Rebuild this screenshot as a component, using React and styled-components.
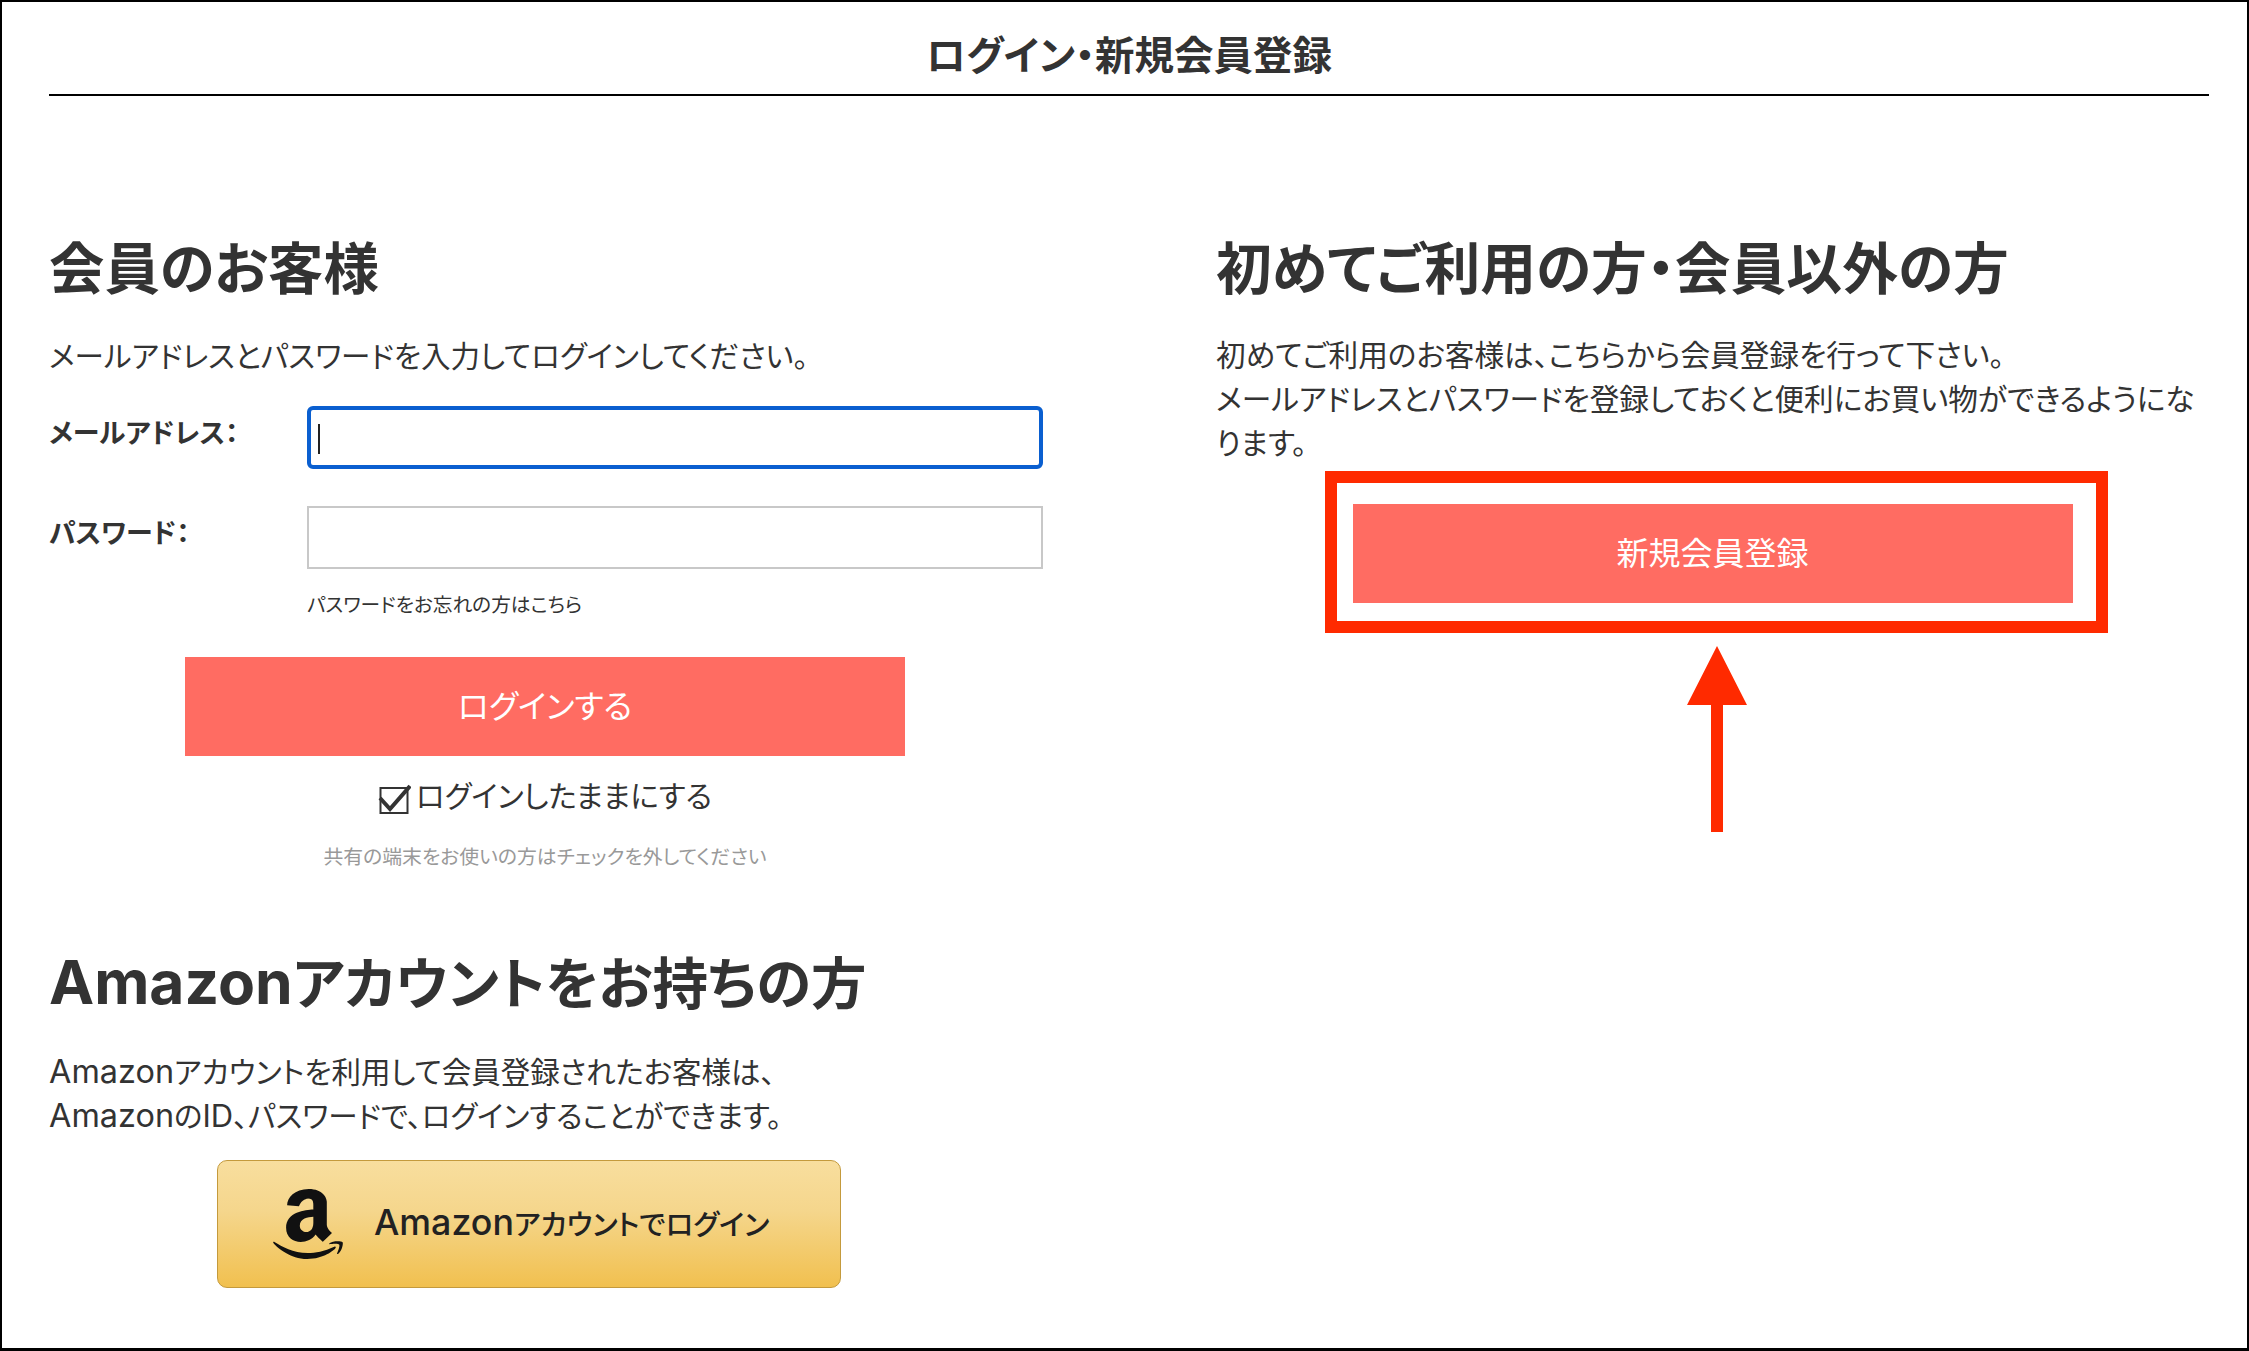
import React from "react";
import styled, { createGlobalStyle } from "styled-components";
import { FaAmazon } from "react-icons/fa";

const GlobalStyle = createGlobalStyle`
  html, body {
    margin: 0;
    padding: 0;
    background: #fff;
  }
  body {
    font-family: "Noto Sans CJK JP", "Liberation Sans", sans-serif;
    font-feature-settings: "palt";
    color: #333;
  }
`;

const Frame = styled.div`
  box-sizing: border-box;
  width: 2249px;
  height: 1351px;
  padding: 0 38px 0 47px;
  border: solid #000;
  border-width: 2px 2px 3px 2px;
  overflow: hidden;
`;

const Header = styled.h1`
  margin: 0;
  height: 94px;
  box-sizing: border-box;
  padding-top: 24px;
  border-bottom: 2px solid #000;
  font-size: 39.5px;
  line-height: 54px;
  font-weight: 700;
  text-align: center;
`;

const Columns = styled.div`
  display: grid;
  grid-template-columns: 992px 993px;
  column-gap: 175px;
  padding-top: 129px;
`;

const Column = styled.section`
  display: flex;
  flex-direction: column;
`;

const Heading = styled.h2`
  margin: 0 0 ${({ $gap }) => $gap}px;
  font-size: ${({ $size }) => $size || 55.8}px;
  line-height: 80px;
  font-weight: 700;
`;

const Latin = styled.span`
  font-family: Inter, "Liberation Sans", sans-serif;
  font-size: ${({ $scale }) => $scale}em;
  line-height: 0;
`;

const Copy = styled.p`
  margin: 0;
  font-size: ${({ $size }) => $size || 29.5}px;
  line-height: 44px;
  font-weight: 400;
`;

const FormRow = styled.div`
  display: grid;
  grid-template-columns: 258px 736px;
  margin-top: ${({ $top }) => $top}px;
`;

const Label = styled.label`
  font-size: 27px;
  line-height: 50px;
  padding-top: 1px;
  font-weight: 700;
`;

const InputWrap = styled.div`
  position: relative;
  height: 63px;
`;

const Input = styled.input`
  display: block;
  box-sizing: border-box;
  width: 100%;
  height: 100%;
  padding: 0 10px;
  outline: none;
  background: #fff;
  border: ${({ $focused }) => ($focused ? "4px solid #0a5fd0" : "2px solid #c8c8c8")};
  border-radius: ${({ $focused }) => ($focused ? 6 : 0)}px;
`;

const Caret = styled.span`
  position: absolute;
  left: 11px;
  top: 18px;
  width: 2px;
  height: 30px;
  background: #222;
`;

const Forgot = styled.a`
  margin: 20px 0 0 258px;
  font-size: 19.7px;
  line-height: 30px;
  color: #333;
`;

const SubmitButton = styled.button`
  display: block;
  width: 720px;
  height: 99px;
  padding: 0 0 5px;
  border: none;
  background: #ff6c62;
  color: #fff;
  font-family: inherit;
  font-feature-settings: inherit;
  font-size: 32px;
  align-self: center;
  margin-top: ${({ $top }) => $top || 0}px;
`;

const KeepRow = styled.label`
  display: flex;
  align-items: center;
  justify-content: center;
  gap: 5px;
  margin-top: 16px;
  height: 44px;
  font-size: 29.5px;
  line-height: 44px;
`;

const CheckIcon = styled.svg`
  width: 33px;
  height: 33px;
  margin-top: 10px;
  flex: none;
`;

const Hint = styled.p`
  margin: 24px 0 0;
  font-size: 19.85px;
  line-height: 32px;
  color: #999;
  text-align: center;
`;

const AmazonSection = styled.div`
  margin-top: 68px;
  display: flex;
  flex-direction: column;
`;

const AmazonButton = styled.button`
  display: flex;
  align-items: center;
  gap: 30px;
  box-sizing: border-box;
  width: 624px;
  height: 128px;
  margin: 24px 0 0 168px;
  padding: 0 0 0 54px;
  border: 1.5px solid #c49a3c;
  border-radius: 10px;
  background: linear-gradient(#f8de9e 0%, #f5d68c 40%, #f1c04f 100%);
  color: #222;
  font-family: inherit;
  font-feature-settings: inherit;
  font-size: 28.4px;
  font-weight: 500;
`;

const AmazonLabel = styled.span`
  padding-bottom: 4px;
`;

const AmazonLogo = styled(FaAmazon)`
  width: 72px;
  height: 80px;
  color: #111;
  flex: none;
`;

const RegisterWrap = styled.div`
  position: relative;
  align-self: center;
  margin-top: 40px;
`;

const RedFrame = styled.div`
  position: absolute;
  left: -28px;
  right: -35px;
  top: -33px;
  bottom: -30px;
  border: 12px solid #ff2a00;
`;

const RedArrow = styled.svg`
  position: absolute;
  left: 334px;
  top: 142px;
  width: 60px;
  height: 186px;
`;

export default function App() {
  return (
    <>
      <GlobalStyle />
      <Frame>
        <Header>ログイン・新規会員登録</Header>
        <Columns>
          <Column>
            <Heading $gap={27} $size={55.4}>会員のお客様</Heading>
            <Copy>メールアドレスとパスワードを入力してログインしてください。</Copy>
            <FormRow $top={30}>
              <Label>メールアドレス：</Label>
              <InputWrap>
                <Input $focused readOnly aria-label="メールアドレス" />
                <Caret />
              </InputWrap>
            </FormRow>
            <FormRow $top={37}>
              <Label>パスワード：</Label>
              <InputWrap>
                <Input type="password" readOnly aria-label="パスワード" />
              </InputWrap>
            </FormRow>
            <Forgot>パスワードをお忘れの方はこちら</Forgot>
            <SubmitButton $top={38}>ログインする</SubmitButton>
            <KeepRow>
              <CheckIcon viewBox="0 0 33 33">
                <rect x="2.5" y="5" width="27" height="25" fill="none" stroke="#333" strokeWidth="2" />
                <path d="M2 15 L12 26 L32 3" fill="none" stroke="#333" strokeWidth="4" />
              </CheckIcon>
              ログインしたままにする
            </KeepRow>
            <Hint>共有の端末をお使いの方はチェックを外してください</Hint>
            <AmazonSection>
              <Heading $gap={28} $size={55.5}>
                <Latin $scale={1.09}>Amazon</Latin>アカウントをお持ちの方
              </Heading>
              <Copy>
                <Latin $scale={1.1}>Amazon</Latin>アカウントを利用して会員登録されたお客様は、
                <br />
                <Latin $scale={1.1}>Amazon</Latin>の<Latin $scale={1.05}>ID</Latin>、パスワードで、ログインすることができます。
              </Copy>
              <AmazonButton>
                <AmazonLogo preserveAspectRatio="none" />
                <AmazonLabel>
                  <Latin $scale={1.26}>Amazon</Latin>アカウントでログイン
                </AmazonLabel>
              </AmazonButton>
            </AmazonSection>
          </Column>
          <Column>
            <Heading $gap={27}>初めてご利用の方・会員以外の方</Heading>
            <Copy $size={29.65}>
              初めてご利用のお客様は、こちらから会員登録を行って下さい。
              <br />
              メールアドレスとパスワードを登録しておくと便利にお買い物ができるようになります。
            </Copy>
            <RegisterWrap>
              <SubmitButton>新規会員登録</SubmitButton>
              <RedFrame />
              <RedArrow viewBox="0 0 60 186">
                <path d="M30 0 L60 59 L36 59 L36 186 L24 186 L24 59 L0 59 Z" fill="#ff2a00" />
              </RedArrow>
            </RegisterWrap>
          </Column>
        </Columns>
      </Frame>
    </>
  );
}
